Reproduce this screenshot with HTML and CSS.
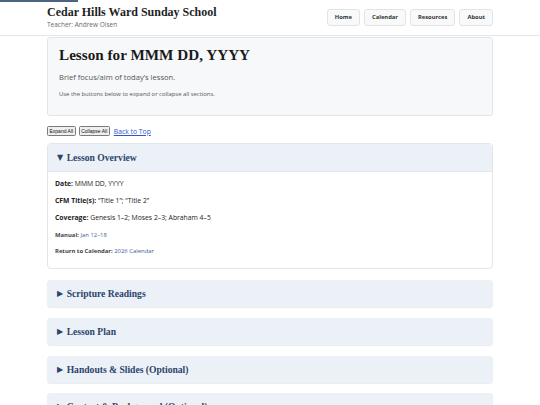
FILE: index.html
```html
<!DOCTYPE html>
<html lang="en">
<head>
<meta charset="utf-8">
<title>Cedar Hills Ward Sunday School</title>
<link rel="stylesheet" href="styles.css">
</head>
<body>
<div class="progress"></div>
<header class="site-header">
  <div class="header-inner">
    <div class="brand">
      <h1 class="site-title">Cedar Hills Ward Sunday School</h1>
      <div class="teacher">Teacher: Andrew Olsen</div>
    </div>
    <nav class="nav">
      <a class="nav-btn" href="#">Home</a>
      <a class="nav-btn" href="#">Calendar</a>
      <a class="nav-btn" href="#">Resources</a>
      <a class="nav-btn" href="#">About</a>
    </nav>
  </div>
</header>
<main class="container">
  <section class="hero">
    <h2 class="hero-title">Lesson for MMM DD, YYYY</h2>
    <p class="hero-aim">Brief focus/aim of today’s lesson.</p>
    <p class="hero-note">Use the buttons below to expand or collapse all sections.</p>
  </section>
  <div class="toolbar">
    <button class="tool-btn" type="button">Expand All</button>
    <button class="tool-btn" type="button">Collapse All</button>
    <a class="top-link" href="#">Back to Top</a>
  </div>
  <details class="section" open>
    <summary class="section-head"><span class="arrow">▼</span>Lesson Overview</summary>
    <div class="section-body">
      <p class="line"><strong>Date:</strong> MMM DD, YYYY</p>
      <p class="line"><strong>CFM Title(s):</strong> “Title 1”; “Title 2”</p>
      <p class="line"><strong>Coverage:</strong> Genesis 1–2; Moses 2–3; Abraham 4–5</p>
      <p class="line small"><strong>Manual:</strong> <a href="#">Jan 12–18</a></p>
      <p class="line small"><strong>Return to Calendar:</strong> <a href="#">2026 Calendar</a></p>
    </div>
  </details>
  <details class="section">
    <summary class="section-head"><span class="arrow">▶</span>Scripture Readings</summary>
  </details>
  <details class="section">
    <summary class="section-head"><span class="arrow">▶</span>Lesson Plan</summary>
  </details>
  <details class="section">
    <summary class="section-head"><span class="arrow">▶</span>Handouts &amp; Slides (Optional)</summary>
  </details>
  <details class="section">
    <summary class="section-head"><span class="arrow">▶</span>Context &amp; Background (Optional)</summary>
  </details>
</main>
</body>
</html>
```
FILE: styles.css
```css
html, body {
  margin: 0;
  padding: 0;
  background: #ffffff;
}
body {
  font-family: "Open Sans", "Noto Sans", sans-serif;
  color: #222;
  overflow: hidden;
}
.progress {
  position: absolute;
  top: 0;
  left: 0;
  width: 78px;
  height: 2px;
  background: #4d6384;
}
.site-header {
  border-bottom: 1px solid #e6e6e6;
}
.header-inner {
  max-width: 446px;
  margin: 0 auto;
  height: 35px;
  display: flex;
  align-items: center;
  justify-content: space-between;
}
.brand {
  display: flex;
  flex-direction: column;
  margin-top: -1px;
}
.site-title {
  font-family: "Liberation Serif", "Times New Roman", serif;
  font-size: 12px;
  line-height: 15px;
  margin: 0;
  color: #1f1f1f;
}
.teacher {
  font-size: 6.5px;
  line-height: 9px;
  color: #6a6a6a;
}
.nav {
  display: flex;
  gap: 4px;
}
.nav-btn {
  display: block;
  font-size: 5.8px;
  font-weight: 700;
  color: #333;
  text-decoration: none;
  background: #f8f9fa;
  border: 1px solid #e3e3e3;
  border-radius: 3px;
  padding: 0 7px;
  line-height: 15px;
}
.container {
  max-width: 446px;
  margin: 1px auto 0;
}
.hero {
  background: #f7f8fa;
  border: 1px solid #e2e4e7;
  border-radius: 3px;
  padding: 7px 11px 17px;
}
.hero-title {
  font-family: "Liberation Serif", "Times New Roman", serif;
  font-size: 15.2px;
  line-height: 20px;
  margin: 0;
  color: #1a1a1a;
}
.hero-aim {
  font-size: 7.6px;
  line-height: 11px;
  color: #555;
  margin: 7px 0 0;
}
.hero-note {
  font-size: 5.9px;
  line-height: 8px;
  color: #555;
  margin: 7px 0 0;
}
.toolbar {
  display: flex;
  align-items: center;
  gap: 3px;
  margin: 10px 0 7px;
}
.tool-btn {
  font-family: "Liberation Sans", Arial, sans-serif;
  font-size: 5px;
  line-height: 8px;
  padding: 0 1.5px;
  border: 1px solid #7a7a7a;
  border-radius: 1.5px;
  background: #efefef;
  color: #111;
}
.top-link {
  font-size: 6.8px;
  color: #2f55c8;
  text-decoration: underline;
  margin-left: 1px;
}
.section {
  border-radius: 4px;
  margin-bottom: 10.7px;
  background: #ecf1f7;
  box-shadow: 0 1px 1px rgba(60, 80, 110, 0.12);
}
.section[open] {
  background: #ffffff;
  border: 1px solid #e3e6ea;
  box-shadow: none;
}
.section-head {
  list-style: none;
  display: flex;
  align-items: center;
  height: 27px;
  padding: 0 10px;
  font-family: "Liberation Serif", "Times New Roman", serif;
  font-weight: 700;
  font-size: 9.6px;
  color: #2b456b;
  background: #ecf1f7;
  border-radius: 4px;
  cursor: pointer;
}
.section-head::-webkit-details-marker {
  display: none;
}
.section[open] .section-head {
  border-radius: 4px 4px 0 0;
  border-bottom: 1px solid #e3e6ea;
  padding-left: 9px;
}
.arrow {
  font-family: "DejaVu Sans", sans-serif;
  font-size: 8px;
  margin-right: 3.5px;
}
.section-body {
  padding: 7px 7px 12.5px;
}
.line {
  font-size: 6.8px;
  line-height: 10px;
  margin: 0 0 7.2px;
  color: #222;
}
.line strong {
  font-weight: 700;
}
.line.small {
  font-size: 5.9px;
  line-height: 9px;
  color: #444;
  margin-bottom: 7.4px;
}
.line.small:last-child {
  margin-bottom: 0;
}
.line a {
  color: #3a5f9a;
  text-decoration: none;
}
```
